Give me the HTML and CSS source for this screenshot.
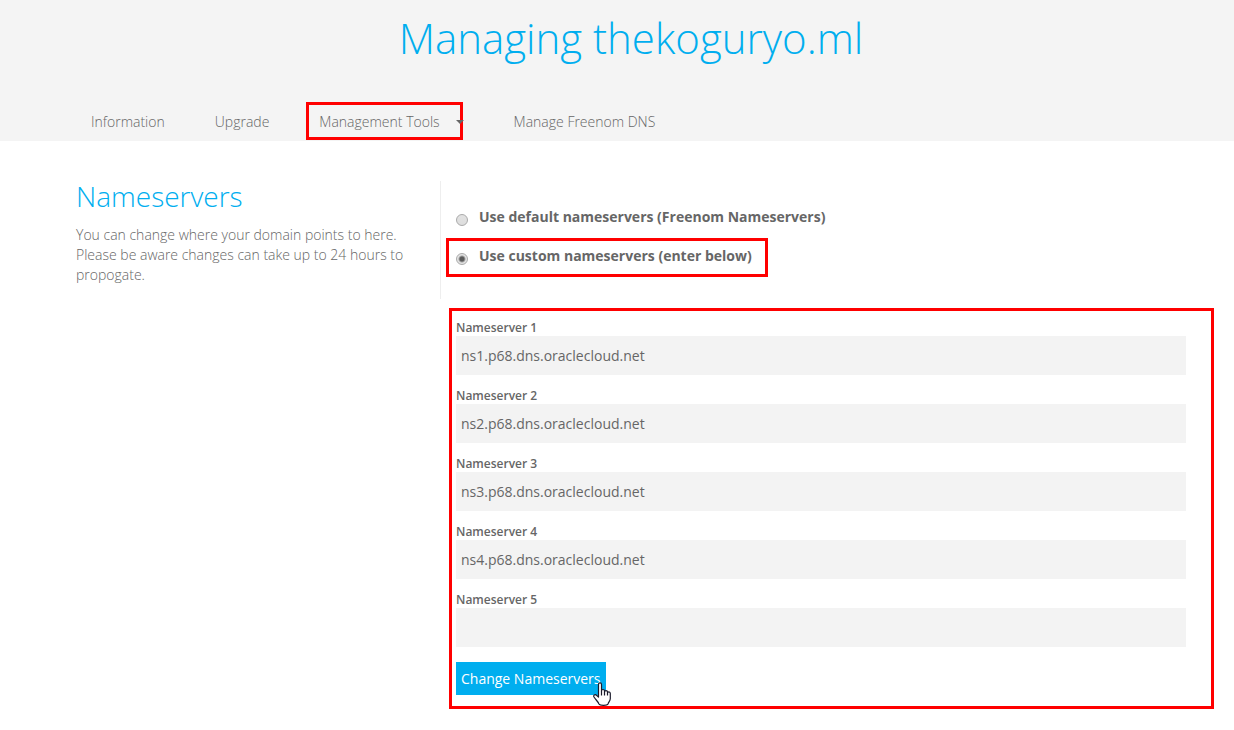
FILE: index.html
```html
<!DOCTYPE html>
<html lang="en">
<head>
<meta charset="utf-8">
<meta name="viewport" content="width=device-width, initial-scale=1">
<title>Managing thekoguryo.ml</title>
<link rel="stylesheet" href="styles.css">
</head>
<body>
<header class="page-header">
  <h1 class="page-title">Managing thekoguryo.ml</h1>
  <nav class="tabs">
    <a class="tab" href="#information">Information</a>
    <a class="tab" href="#upgrade">Upgrade</a>
    <a class="tab tab-menu highlight" href="#tools">Management Tools<svg class="caret" viewBox="0 0 8 4" aria-hidden="true"><path d="M0 0h8L4 4z" fill="#666"/></svg></a>
    <a class="tab" href="#dns">Manage Freenom DNS</a>
  </nav>
</header>
<main class="content">
  <div class="intro">
    <section class="about">
      <h2 class="section-title">Nameservers</h2>
      <p class="description">You can change where your domain points to here. Please be aware changes can take up to 24 hours to propogate.</p>
    </section>
    <div class="choices">
      <label class="choice"><input class="radio" type="radio" name="mode" form="ns-form"><span>Use default nameservers (Freenom Nameservers)</span></label>
      <label class="choice highlight"><input class="radio" type="radio" name="mode" form="ns-form" checked><span>Use custom nameservers (enter below)</span></label>
    </div>
  </div>
  <form class="ns-form highlight" id="ns-form">
    <div class="field"><label class="field-label" for="ns1">Nameserver 1</label><input class="field-input" id="ns1" type="text" value="ns1.p68.dns.oraclecloud.net"></div>
    <div class="field"><label class="field-label" for="ns2">Nameserver 2</label><input class="field-input" id="ns2" type="text" value="ns2.p68.dns.oraclecloud.net"></div>
    <div class="field"><label class="field-label" for="ns3">Nameserver 3</label><input class="field-input" id="ns3" type="text" value="ns3.p68.dns.oraclecloud.net"></div>
    <div class="field"><label class="field-label" for="ns4">Nameserver 4</label><input class="field-input" id="ns4" type="text" value="ns4.p68.dns.oraclecloud.net"></div>
    <div class="field"><label class="field-label" for="ns5">Nameserver 5</label><input class="field-input" id="ns5" type="text"></div>
    <div class="actions">
      <button class="submit" type="button">Change Nameservers</button>
      <svg class="pointer" viewBox="0 0 18 24" aria-hidden="true"><path d="M5.5 15V2.5C5.5.2 8.500.2 8.500 2.500V9C8.500 7 11.500 7 11.500 9V10C11.500 8.200 14.500 8.200 14.500 10V11C14.500 9.500 17.300 9.500 17.300 11.500V16.500C17.300 19 15.500 20 15 22C14 23.800 7 23.800 6 22C5 19.500 2.500 17.500 1 15C0 13.200 2 12 3.500 13.200Z" fill="#fff" stroke="#1a1a2a" stroke-width="1.200" stroke-linejoin="round"/><path d="M8.500 9v4.500M11.500 10v3.500M14.500 11v2.500" fill="none" stroke="#1a1a2a" stroke-width="1.200"/></svg>
    </div>
  </form>
</main>
</body>
</html>
```
FILE: styles.css
```css
* { box-sizing: border-box; }
body {
  margin: 0;
  background: #fff;
  color: #666;
  font: 300 14px/20px "Open Sans", sans-serif;
}
.highlight { border: 3px solid #f00; }

.page-header { background: #f4f4f4; padding-bottom: 1px; }
.page-title {
  margin: 0;
  padding: 8px 48px 34px 76px;
  color: #00aeef;
  font-size: 42px;
  font-weight: 300;
  line-height: 60px;
  text-align: center;
}
.tabs {
  display: flex;
  align-items: center;
  gap: 24px;
  padding-left: 78px;
}
.tab { padding: 7px 13px 5px; color: #666; text-decoration: none; }
.tab-menu {
  position: relative;
  margin-right: 14px;
  padding: 7px 20px 5px 10px;
}
.caret { position: absolute; right: -4px; top: 15px; width: 8px; height: 4px; }

.content { padding: 40px 20px 20px 76px; }
.intro { display: grid; grid-template-columns: 364px 1fr; }
.section-title {
  margin: 0 0 14px;
  color: #00aeef;
  font-size: 28px;
  font-weight: 300;
  line-height: 30px;
}
.description { margin: 0; padding-right: 24px; }
.choices {
  display: flex;
  flex-direction: column;
  align-items: flex-start;
  padding: 18px 0 22px 5px;
  border-left: 1px solid #eee;
}
.choice {
  display: flex;
  gap: 11px;
  padding: 5px 13px 8px 7px;
  font-weight: 700;
}
.choice:not(.highlight) { padding: 8px 16px 11px 10px; }
.radio {
  appearance: none;
  flex: none;
  width: 12px;
  height: 12px;
  margin: 7px 0 0;
  border: 1px solid #aaa;
  border-radius: 50%;
  background: linear-gradient(#e2e2e2, #ddd);
}
.radio:checked { background: radial-gradient(circle, #5a5a5a 0 2px, #e4e4e4 4px); }

.ns-form { margin: 9px 0 0 373px; padding: 8px 25px 11px 4px; }
.field { margin-bottom: 12px; }
.field-label {
  display: block;
  font-size: 12px;
  font-weight: 600;
  line-height: 17px;
}
.field-input {
  display: block;
  width: 100%;
  height: 39px;
  padding: 0 5px;
  border: 0;
  background: #f3f3f3;
  color: #666;
  font: 400 14px/20px "Open Sans", sans-serif;
}
.actions { position: relative; display: flex; margin-top: 15px; }
.submit {
  height: 33px;
  padding: 0 5px;
  border: 0;
  background: #00aeef;
  color: #fff;
  font: 400 14px/20px "Open Sans", sans-serif;
}
.pointer { position: absolute; left: 137px; top: 20px; width: 18px; height: 24px; }
```
